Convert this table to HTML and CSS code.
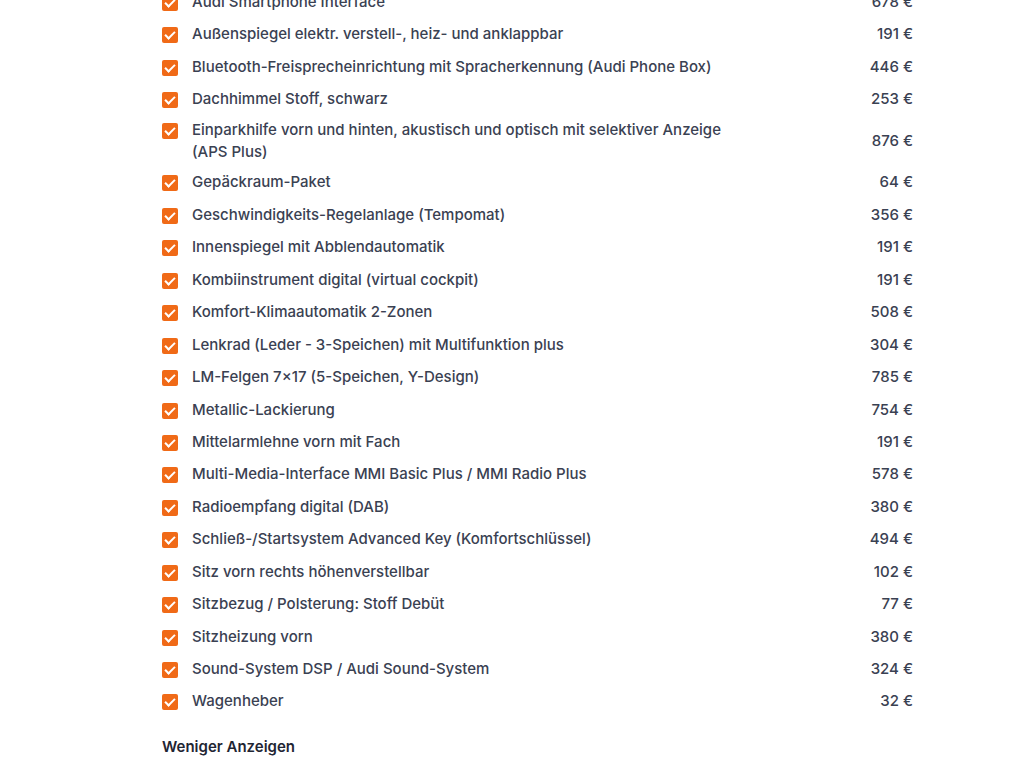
FILE: index.html
```html
<!DOCTYPE html>
<html lang="de">
<head>
<meta charset="utf-8">
<title>Ausstattung</title>
<link rel="stylesheet" href="styles.css">
</head>
<body>
<main class="options">
  <ul class="option-list">
    <li class="option"><span class="item"><span class="check"></span><span class="label">Audi Smartphone Interface</span></span><span class="price">678 €</span></li>
    <li class="option"><span class="item"><span class="check"></span><span class="label">Außenspiegel elektr. verstell-, heiz- und anklappbar</span></span><span class="price">191 €</span></li>
    <li class="option"><span class="item"><span class="check"></span><span class="label">Bluetooth-Freisprecheinrichtung mit Spracherkennung (Audi Phone Box)</span></span><span class="price">446 €</span></li>
    <li class="option"><span class="item"><span class="check"></span><span class="label">Dachhimmel Stoff, schwarz</span></span><span class="price">253 €</span></li>
    <li class="option"><span class="item"><span class="check"></span><span class="label">Einparkhilfe vorn und hinten, akustisch und optisch mit selektiver Anzeige (APS Plus)</span></span><span class="price">876 €</span></li>
    <li class="option"><span class="item"><span class="check"></span><span class="label">Gepäckraum-Paket</span></span><span class="price">64 €</span></li>
    <li class="option"><span class="item"><span class="check"></span><span class="label">Geschwindigkeits-Regelanlage (Tempomat)</span></span><span class="price">356 €</span></li>
    <li class="option"><span class="item"><span class="check"></span><span class="label">Innenspiegel mit Abblendautomatik</span></span><span class="price">191 €</span></li>
    <li class="option"><span class="item"><span class="check"></span><span class="label">Kombiinstrument digital (virtual cockpit)</span></span><span class="price">191 €</span></li>
    <li class="option"><span class="item"><span class="check"></span><span class="label">Komfort-Klimaautomatik 2-Zonen</span></span><span class="price">508 €</span></li>
    <li class="option"><span class="item"><span class="check"></span><span class="label">Lenkrad (Leder - 3-Speichen) mit Multifunktion plus</span></span><span class="price">304 €</span></li>
    <li class="option"><span class="item"><span class="check"></span><span class="label">LM-Felgen 7×17 (5-Speichen, Y-Design)</span></span><span class="price">785 €</span></li>
    <li class="option"><span class="item"><span class="check"></span><span class="label">Metallic-Lackierung</span></span><span class="price">754 €</span></li>
    <li class="option"><span class="item"><span class="check"></span><span class="label">Mittelarmlehne vorn mit Fach</span></span><span class="price">191 €</span></li>
    <li class="option"><span class="item"><span class="check"></span><span class="label">Multi-Media-Interface MMI Basic Plus / MMI Radio Plus</span></span><span class="price">578 €</span></li>
    <li class="option"><span class="item"><span class="check"></span><span class="label">Radioempfang digital (DAB)</span></span><span class="price">380 €</span></li>
    <li class="option"><span class="item"><span class="check"></span><span class="label">Schließ-/Startsystem Advanced Key (Komfortschlüssel)</span></span><span class="price">494 €</span></li>
    <li class="option"><span class="item"><span class="check"></span><span class="label">Sitz vorn rechts höhenverstellbar</span></span><span class="price">102 €</span></li>
    <li class="option"><span class="item"><span class="check"></span><span class="label">Sitzbezug / Polsterung: Stoff Debüt</span></span><span class="price">77 €</span></li>
    <li class="option"><span class="item"><span class="check"></span><span class="label">Sitzheizung vorn</span></span><span class="price">380 €</span></li>
    <li class="option"><span class="item"><span class="check"></span><span class="label">Sound-System DSP / Audi Sound-System</span></span><span class="price">324 €</span></li>
    <li class="option"><span class="item"><span class="check"></span><span class="label">Wagenheber</span></span><span class="price">32 €</span></li>
  </ul>
  <button class="toggle" type="button">Weniger Anzeigen</button>
</main>
</body>
</html>
```
FILE: styles.css
```css
html, body {
  margin: 0;
  padding: 0;
  background: #ffffff;
}
body {
  font-family: Inter, "Noto Sans", "Liberation Sans", sans-serif;
  font-size: 15px;
  font-weight: 500;
  color: #3a4152;
  overflow: hidden;
}
.options {
  width: 751px;
  margin-left: 162px;
  margin-top: -14.5px;
}
.option-list {
  list-style: none;
  margin: 0;
  padding: 0;
}
.option {
  box-sizing: border-box;
  display: flex;
  align-items: center;
  min-height: 32.44px;
  padding: 3.5px 0;
  line-height: 22px;
}
.item {
  display: flex;
  align-items: flex-start;
  flex: 0 1 590px;
  max-width: 590px;
}
.check {
  flex: none;
  width: 16px;
  height: 16px;
  margin-top: 4px;
  margin-right: 14px;
  border-radius: 2px;
  background: #f06a17;
  position: relative;
}
.check::after {
  content: "";
  position: absolute;
  left: 5px;
  top: 2px;
  width: 4px;
  height: 8px;
  border: solid #ffffff;
  border-width: 0 2px 2px 0;
  transform: rotate(45deg);
}
.label {
  flex: 1 1 auto;
}
.price {
  margin-left: auto;
  white-space: nowrap;
  text-align: right;
}
.toggle {
  display: block;
  margin-top: 19.5px;
  padding: 0;
  border: 0;
  background: none;
  font: inherit;
  font-weight: 600;
  line-height: 20px;
  color: #1f2533;
  cursor: pointer;
}
```
